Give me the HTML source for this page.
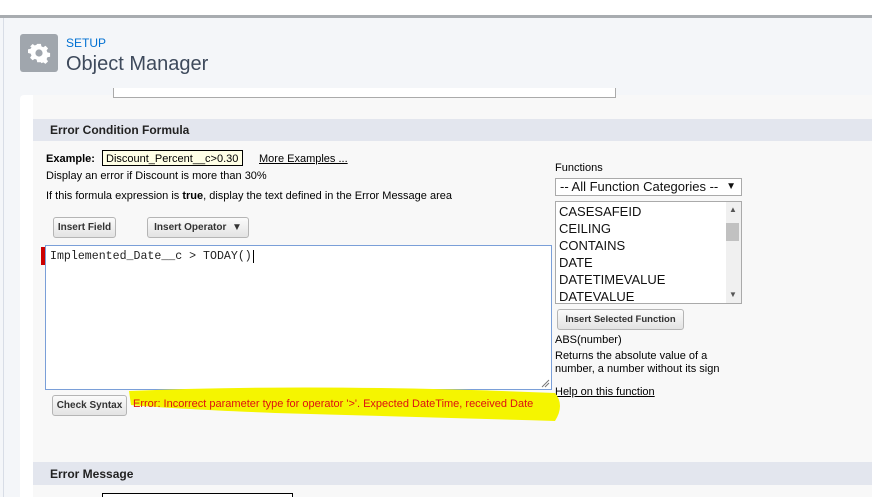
<!DOCTYPE html>
<html><head><style>
html,body{margin:0;width:872px;height:497px;overflow:hidden}
body{background:#f4f6f9;font-family:"Liberation Sans",Arial,sans-serif;position:relative}
.a{position:absolute}
.btn{position:absolute;background:linear-gradient(#fbfbfb,#e3e3e3);border:1px solid #b5b5b5;border-radius:3px;font-size:10px;font-weight:bold;color:#333;box-sizing:border-box;text-align:center;white-space:nowrap;overflow:hidden}
.t{position:absolute;font-size:11px;color:#000;white-space:nowrap}
</style></head><body>
<div class="a" style="left:0;top:0;width:872px;height:15px;background:#fff"></div>
<div class="a" style="left:0;top:15px;width:872px;height:3px;background:#a8acb0"></div>
<div class="a" style="left:3px;top:18px;width:1px;height:479px;background:#d8dde6"></div>
<div class="a" style="left:20px;top:34px;width:38px;height:38px;background:#a0a6ad;border-radius:3px"></div>
<svg class="a" style="left:27px;top:41px" width="24" height="24" viewBox="0 0 24 24"><path fill="#fff" d="M10 2h4l.6 2.8 2 .9 2.4-1.6 2.8 2.8-1.6 2.4.9 2 2.9.7v4l-2.9.6-.9 2 1.6 2.4-2.8 2.8-2.4-1.6-2 .9L14 22h-4l-.6-2.8-2-.9L5 19.9 2.2 17.1l1.6-2.4-.9-2L0 12v-4l2.9-.6.9-2L2.2 5 5 2.2l2.4 1.6 2-.9z" transform="translate(1 1) scale(.92)"/><circle cx="12" cy="12" r="3.6" fill="#a0a6ad"/></svg>
<div class="t" style="left:66px;top:36px;font-size:12px;color:#0070d2">SETUP</div>
<div class="t" style="left:66px;top:53px;font-size:20px;color:#3e4a5c">Object Manager</div>
<div class="a" style="left:20px;top:95px;width:852px;height:402px;background:#fff;border-radius:4px 0 0 0"></div>
<div class="a" style="left:33px;top:95px;width:839px;height:402px;background:#f8f8f8"></div>
<div class="a" style="left:113px;top:88px;width:501px;height:9px;border:1px solid #aaa;border-top:none;background:#fff"></div>
<div class="a" style="left:33px;top:119px;width:839px;height:22px;background:#e3e6ee"></div>
<div class="t" style="left:50px;top:123px;font-size:12px;font-weight:bold;color:#222">Error Condition Formula</div>
<div class="t" style="left:46px;top:153px;font-weight:bold">Example:</div>
<div class="a" style="left:102px;top:150px;height:16px;border:1px solid #000;background:#ffffe6;font-size:11px;line-height:16px;padding-left:3px;box-sizing:border-box;width:141px">Discount_Percent__c&gt;0.30</div>
<div class="t" style="left:259px;top:153px;text-decoration:underline">More Examples ...</div>
<div class="t" style="left:46px;top:170px">Display an error if Discount is more than 30%</div>
<div class="t" style="left:46px;top:190px">If this formula expression is <b>true</b>, display the text defined in the Error Message area</div>
<div class="btn" style="left:53px;top:217px;width:63px;height:21px;line-height:19px">Insert Field</div>
<div class="btn" style="left:147px;top:217px;width:102px;height:21px;line-height:19px">Insert Operator &nbsp;▼</div>
<div class="a" style="left:41px;top:247px;width:4px;height:18px;background:#c00"></div>
<div class="a" style="left:45px;top:245px;width:507px;height:145px;border:1px solid #7a9fd8;background:#fff;box-sizing:border-box"></div>
<div class="t" style="left:50px;top:250px;font-family:'Liberation Mono',monospace;font-size:11.6px;color:#222">Implemented_Date__c &gt; TODAY()<span style="border-left:1px solid #000;margin-left:1px"></span></div>
<svg class="a" style="left:540px;top:378px" width="10" height="10"><path d="M2 9L9 2M5 9L9 5" stroke="#777"/></svg>
<div class="t" style="left:555px;top:162px">Functions</div>
<div class="a" style="left:555px;top:178px;width:187px;height:18px;border:1px solid #aaa;background:#fff;box-sizing:border-box;font-size:13px;line-height:16px;padding-left:4px;color:#111">-- All Function Categories --<span style="position:absolute;right:5px;font-size:10px">▼</span></div>
<div class="a" style="left:555px;top:201px;width:187px;height:103px;border:1px solid #aaa;background:#fff;box-sizing:border-box;font-size:13px;line-height:17px;padding:1px 3px;color:#111">CASESAFEID<br>CEILING<br>CONTAINS<br>DATE<br>DATETIMEVALUE<br>DATEVALUE</div>
<div class="a" style="left:726px;top:202px;width:15px;height:101px;background:#f0f0f0"></div>
<div class="a" style="left:726px;top:223px;width:13px;height:18px;background:#c1c1c1"></div>
<div class="t" style="left:729px;top:205px;font-size:8px;color:#555">▲</div>
<div class="t" style="left:729px;top:290px;font-size:8px;color:#555">▼</div>
<div class="btn" style="left:557px;top:309px;width:127px;height:21px;line-height:19px;font-size:9.5px">Insert Selected Function</div>
<div class="t" style="left:555px;top:334px">ABS(number)</div>
<div class="t" style="left:555px;top:350px">Returns the absolute value of a</div>
<div class="t" style="left:555px;top:363px">number, a number without its sign</div>
<div class="t" style="left:555px;top:386px;text-decoration:underline">Help on this function</div>
<svg class="a" style="left:115px;top:385px" width="450" height="40"><path d="M14 6Q200 -2 440 8Q450 20 440 36Q300 32 160 28Q60 24 16 20Z" fill="#f5f500"/></svg>
<div class="btn" style="left:52px;top:395px;width:75px;height:21px;line-height:19px">Check Syntax</div>
<div class="t" style="left:133px;top:398px;color:#d11">Error: Incorrect parameter type for operator '&gt;'. Expected DateTime, received Date</div>
<div class="a" style="left:33px;top:462px;width:839px;height:23px;background:#e3e6ee"></div>
<div class="t" style="left:50px;top:467px;font-size:12px;font-weight:bold;color:#222">Error Message</div>
<div class="a" style="left:102px;top:493px;width:189px;height:10px;border:1px solid #000;background:#fff"></div>
</body></html>
